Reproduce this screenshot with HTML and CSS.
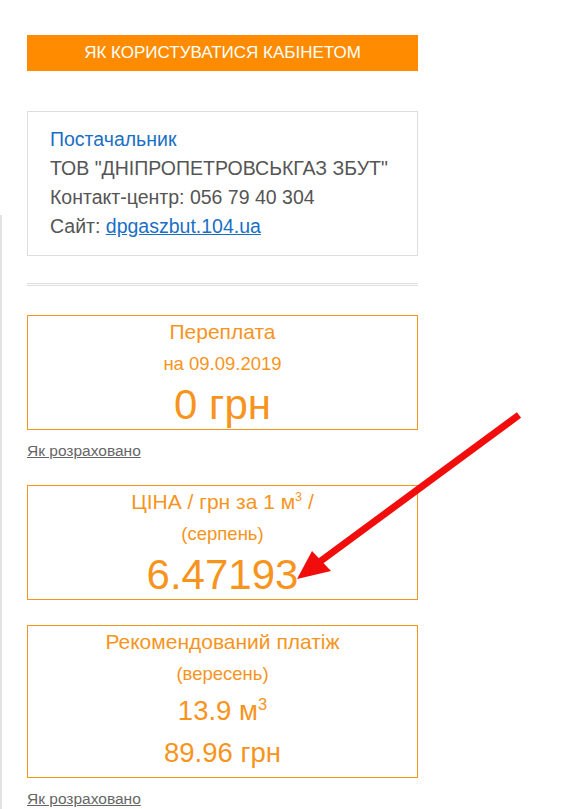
FILE: index.html
```html
<!DOCTYPE html>
<html>

<head>
    <title>Особистий кабінет</title>
    <meta name="viewport" content="width=device-width,initial-scale=1" />
    <link rel="stylesheet" href="styles.css">
</head>

<body>
    <div class="page">
        <div class="side-edge"></div>

        <main class="cabinet">
            <a class="help-button" href="#">Як користуватися кабінетом</a>

            <div class="supplier">
                <div class="supplier-title">Постачальник</div>
                <div>ТОВ "ДНІПРОПЕТРОВСЬКГАЗ ЗБУТ"</div>
                <div>Контакт-центр: 056 79 40 304</div>
                <div>Сайт: <a href="#">dpgaszbut.104.ua</a></div>
            </div>

            <hr class="divider">

            <div class="info-box">
                <div class="info-title">Переплата</div>
                <div class="info-sub">на 09.09.2019</div>
                <div class="info-big">0 грн</div>
            </div>
            <a class="calc-link" href="#">Як розраховано</a>

            <div class="info-box">
                <div class="info-title">ЦІНА / грн за 1 м<sup>3</sup> /</div>
                <div class="info-sub">(серпень)</div>
                <div class="info-big">6.47193</div>
            </div>

            <div class="info-box recommended">
                <div class="info-title">Рекомендований платіж</div>
                <div class="info-sub">(вересень)</div>
                <div class="info-mid">13.9 м<sup>3</sup></div>
                <div class="info-mid">89.96 грн</div>
            </div>
            <a class="calc-link" href="#">Як розраховано</a>
        </main>
    </div>

    <!-- annotation drawn over the screenshot -->
    <svg class="arrow" width="574" height="809" viewBox="0 0 574 809">
        <line x1="519" y1="415" x2="318" y2="563" stroke="#f20d0d" stroke-width="7" />
        <polygon points="297,579 312,551 331,571" fill="#f20d0d" />
    </svg>
</body>

</html>
```

FILE: styles.css
```css
* {
    box-sizing: border-box;
}

body {
    margin: 0;
    font-family: "Liberation Sans", Arial, sans-serif;
    color: #555;
    background: #fff;
}

.page {
    display: flex;
    align-items: flex-start;
}

.side-edge {
    width: 2px;
    height: 594px;
    margin-top: 215px;
    background: #e2e2e2;
}

.cabinet {
    width: 391px;
    margin-left: 25px;
    padding-top: 35px;
}

.help-button {
    display: block;
    height: 36px;
    line-height: 36px;
    background: #ff8c00;
    color: #fff;
    text-align: center;
    text-transform: uppercase;
    text-decoration: none;
    font-size: 17px;
}

.supplier {
    margin-top: 40px;
    border: 1px solid #ddd;
    padding: 13px 22px 14px;
    font-size: 19.5px;
    line-height: 29px;
    color: #555;
}

.supplier-title {
    color: #1a6fc4;
}

.supplier a {
    color: #1a6fc4;
}

.divider {
    margin: 27px 0 29px;
    border: 0;
    border-top: 1px solid #ddd;
    border-bottom: 1px solid #ddd;
    height: 3px;
}

.info-box {
    border: 1px solid #f7941d;
    color: #f7941d;
    text-align: center;
}

.info-title {
    font-size: 21px;
    line-height: 32px;
}

.info-sub {
    font-size: 18.5px;
    line-height: 32px;
}

.info-big {
    font-size: 42px;
    line-height: 49px;
}

.info-mid {
    font-size: 27.5px;
    line-height: 42px;
}

.recommended {
    margin-top: 25px;
    padding-bottom: 3px;
}

sup {
    font-size: 0.6em;
    line-height: 0;
    vertical-align: 0.6em;
}

.calc-link {
    display: block;
    margin: 12px 0 25px;
    font-size: 15.5px;
    line-height: 18px;
    color: #666;
}

.arrow {
    position: absolute;
    left: 0;
    top: 0;
    pointer-events: none;
}
```
